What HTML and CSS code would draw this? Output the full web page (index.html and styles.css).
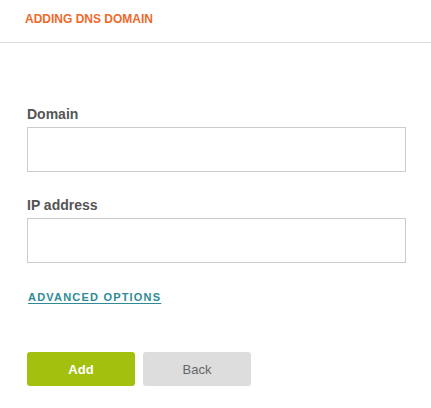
FILE: index.html
```html
<!DOCTYPE html>
<html>
<head>
<meta charset="utf-8">
<link rel="stylesheet" href="styles.css">
</head>
<body>
<div class="header"><span class="title">ADDING DNS DOMAIN</span></div>
<form class="form">
  <div class="field">
    <label class="label">Domain</label>
    <input class="input" type="text">
  </div>
  <div class="field">
    <label class="label">IP address</label>
    <input class="input" type="text">
  </div>
  <a class="advanced" href="#">ADVANCED OPTIONS</a>
  <div class="actions">
    <button class="btn btn-add" type="button">Add</button>
    <button class="btn btn-back" type="button">Back</button>
  </div>
</form>
</body>
</html>
```
FILE: styles.css
```css
html, body {
  margin: 0;
  padding: 0;
  background: #fff;
  font-family: "Liberation Sans", Arial, sans-serif;
}
.header {
  border-bottom: 1px solid #dcdcdc;
  padding-left: 25px;
  display: flex;
  align-items: center;
  box-sizing: border-box;
  height: 43px;
  padding-bottom: 4px;
}
.title {
  color: #ee6a2c;
  font-size: 12px;
  font-weight: bold;
}
.form {
  padding: 63px 25px 0 27px;
  display: flex;
  flex-direction: column;
  margin: 0;
}
.field {
  display: flex;
  flex-direction: column;
  gap: 5px;
  margin-bottom: 25px;
}
.label {
  color: #555;
  font-size: 14px;
  font-weight: bold;
  line-height: 16px;
}
.input {
  box-sizing: border-box;
  width: 379px;
  height: 45px;
  border: 1px solid #ccc;
  border-radius: 0;
  margin: 0;
  padding: 0 10px;
  font: inherit;
}
.advanced {
  margin-top: 2px;
  align-self: flex-start;
  color: #2e8b95;
  font-size: 11px;
  font-weight: bold;
  letter-spacing: 1.2px;
  line-height: 14px;
  text-decoration: underline;
  text-underline-offset: 2px;
  text-decoration-thickness: 1px;
  padding-left: 1px;
}
.actions {
  display: flex;
  gap: 8px;
  margin-top: 48px;
}
.btn {
  width: 108px;
  height: 34px;
  border: none;
  border-radius: 3px;
  font-family: "Liberation Sans", Arial, sans-serif;
  font-size: 13px;
  padding: 0;
}
.btn-add {
  background: #a3c00f;
  color: #fff;
  font-weight: bold;
}
.btn-back {
  background: #dddddd;
  color: #666;
}
```
